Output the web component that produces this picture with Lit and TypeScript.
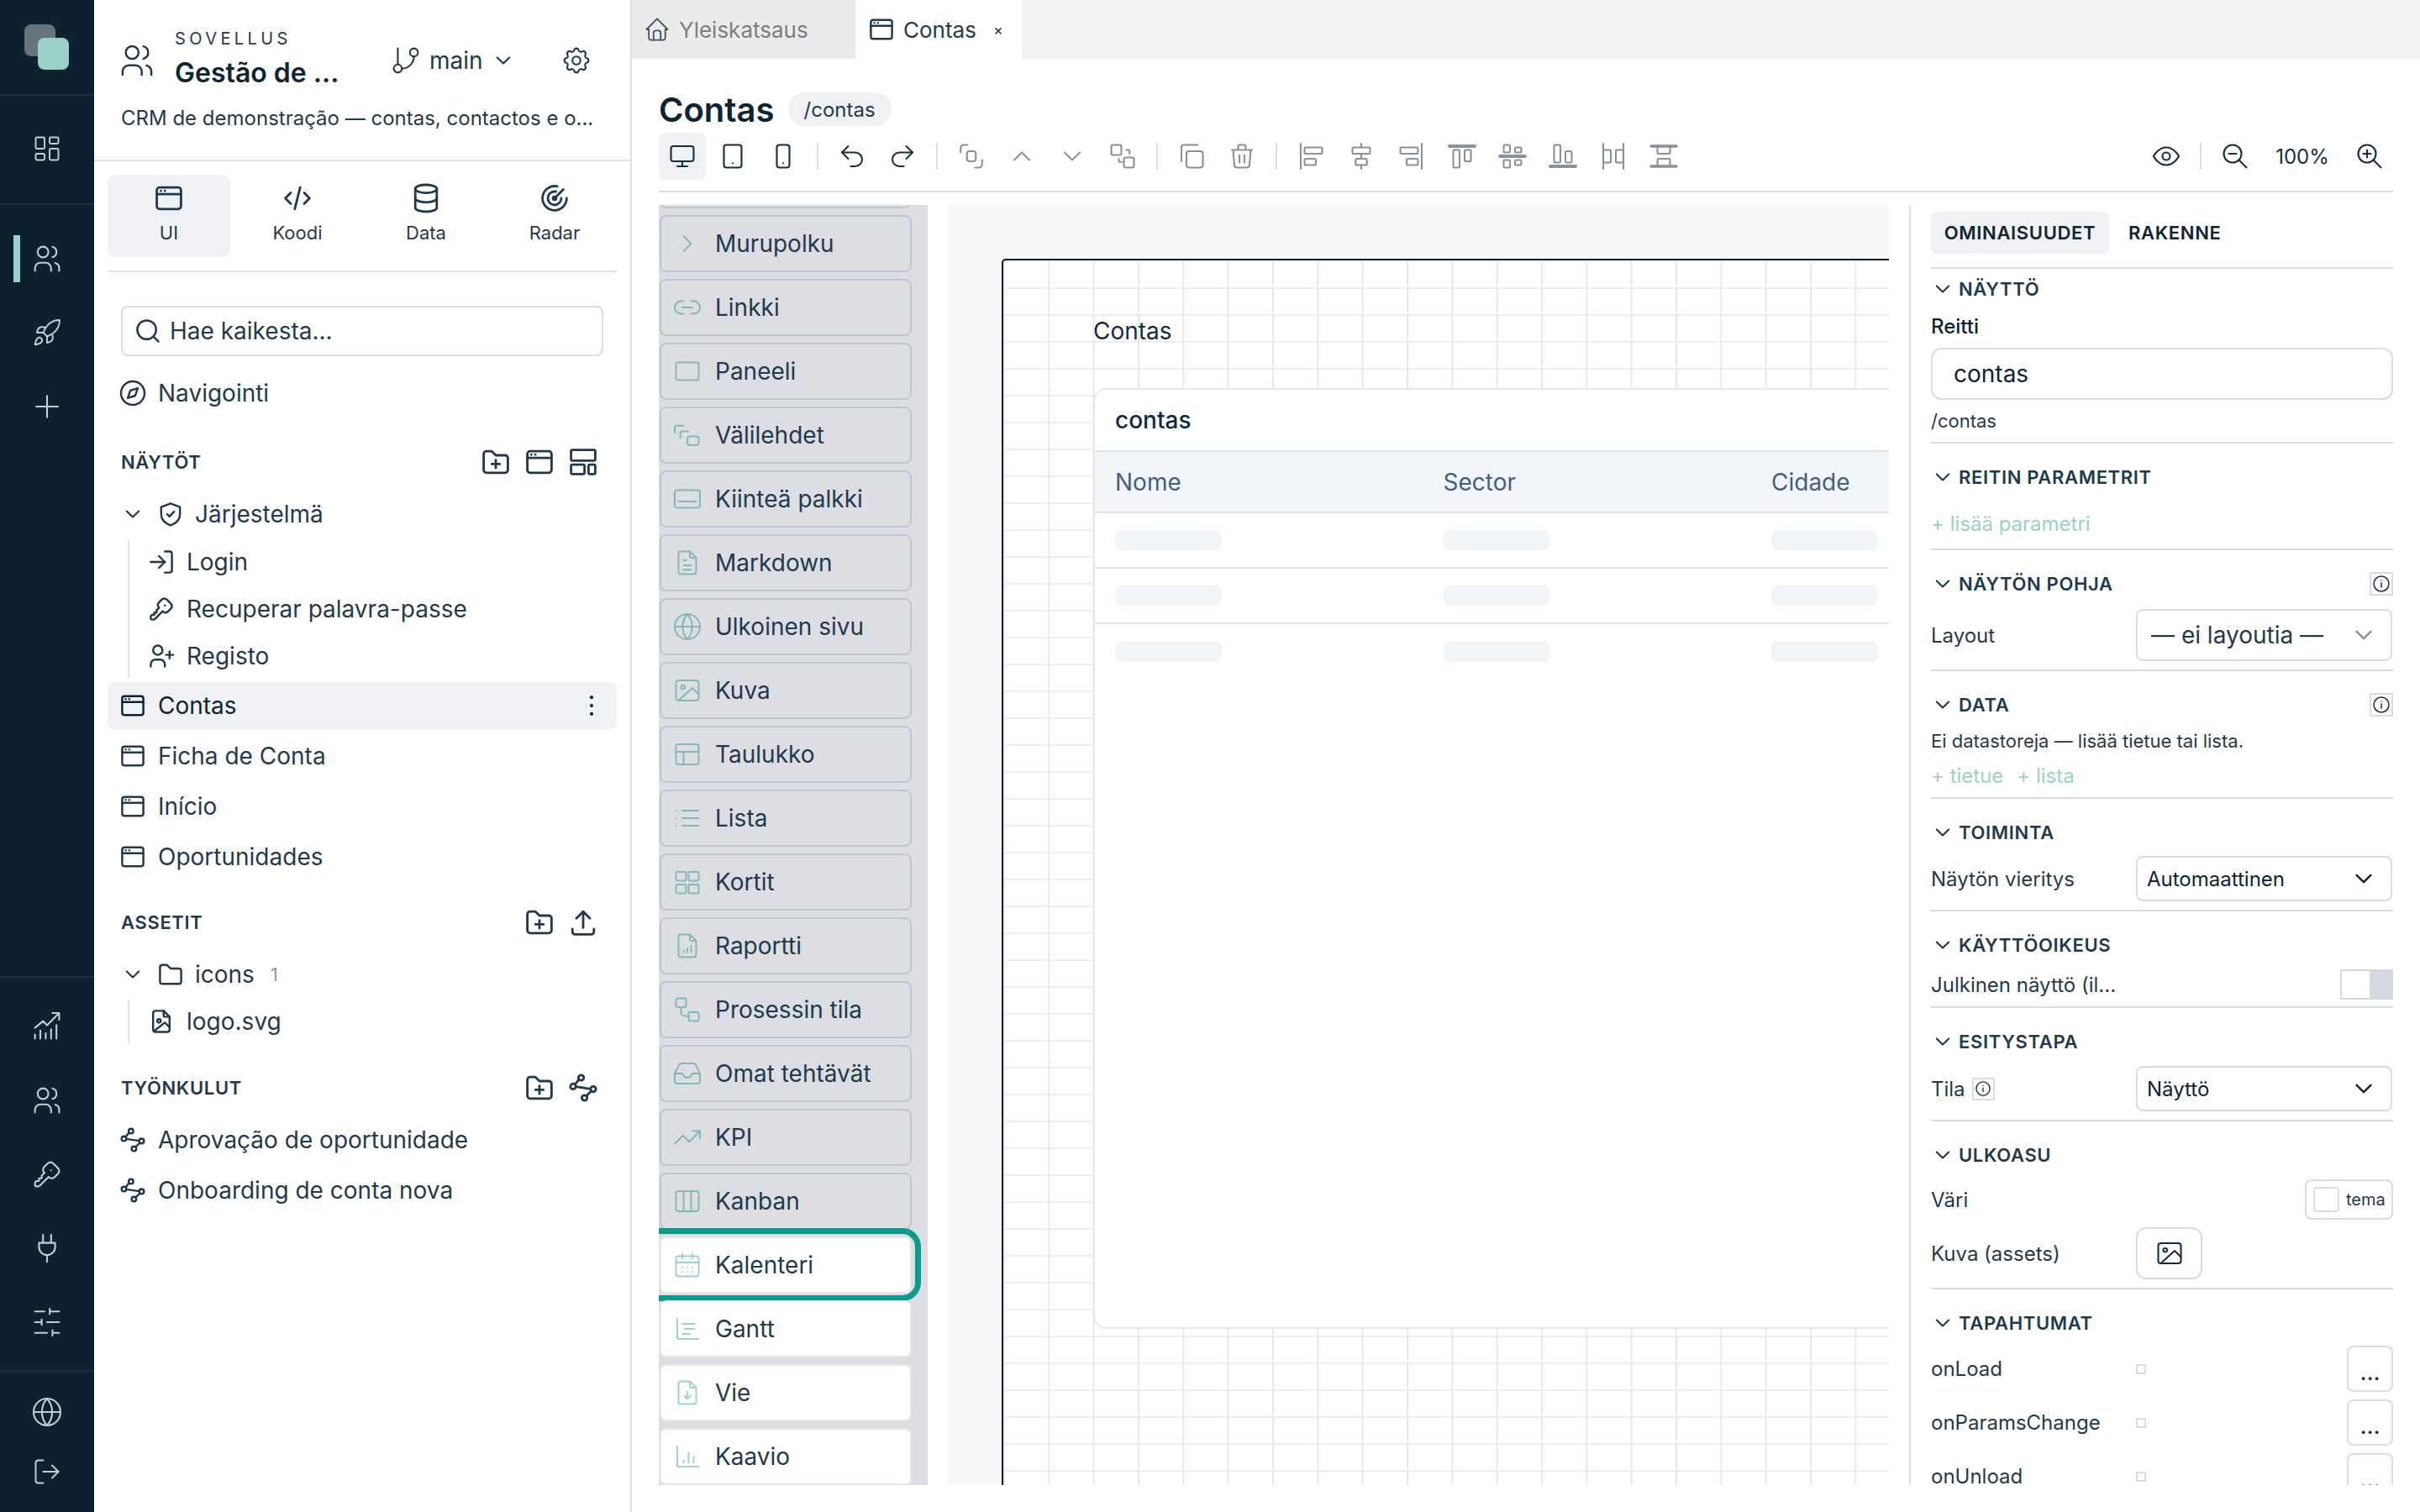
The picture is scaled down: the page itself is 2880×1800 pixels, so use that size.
import { LitElement, css, html, svg, nothing } from "lit";
import { customElement } from "lit/decorators.js";

const filePath = svg`<path d="M14 3v4a1 1 0 0 0 1 1h4"/><path d="M17 21H7a2 2 0 0 1-2-2V5a2 2 0 0 1 2-2h7l5 5v11a2 2 0 0 1-2 2z"/>`;
const windowIcon = svg`<rect x="3" y="4" width="18" height="16" rx="2"/><path d="M3 9h18M6 6.5h.01M9 6.5h.01"/>`;

const icons: Record<string, unknown> = {
  dashboard: svg`<rect x="3" y="3" width="7" height="9" rx="1"/><rect x="14" y="3" width="7" height="5" rx="1"/><rect x="14" y="12" width="7" height="9" rx="1"/><rect x="3" y="16" width="7" height="5" rx="1"/>`,
  users: svg`<circle cx="9" cy="7" r="4"/><path d="M3 21v-2a4 4 0 0 1 4-4h4a4 4 0 0 1 4 4v2"/><path d="M16 3.13a4 4 0 0 1 0 7.75"/><path d="M21 21v-2a4 4 0 0 0-3-3.85"/>`,
  rocket: svg`<path d="M4.5 16.5c-1.5 1.26-2 5-2 5s3.74-.5 5-2c.71-.84.7-2.13-.09-2.91a2.18 2.18 0 0 0-2.91-.09z"/><path d="m12 15-3-3a22 22 0 0 1 2-3.95A12.88 12.88 0 0 1 22 2c0 2.72-.78 7.5-6 11a22.35 22.35 0 0 1-4 2z"/><path d="M9 12H4s.55-3.03 2-4c1.62-1.08 5 0 5 0"/><path d="M12 15v5s3.03-.55 4-2c1.08-1.62 0-5 0-5"/>`,
  plus: svg`<path d="M12 4v16M4 12h16"/>`,
  analytics: svg`<path d="M3 21v-3M7 21v-6M11 21v-4M15 21v-7M19 21v-10M3 13l6-5 3 3 9-9M16 2h5v5"/>`,
  key: svg`<path d="M16.555 3.843l3.602 3.602a2.877 2.877 0 0 1 0 4.069l-2.643 2.643a2.877 2.877 0 0 1-4.069 0l-.301-.301l-6.558 6.558a2 2 0 0 1-1.239.578l-.175.008h-1.172a1 1 0 0 1-.993-.883l-.007-.117v-1.172a2 2 0 0 1 .467-1.284l.119-.13l.414-.414h2v-2h2v-2l2.144-2.144l-.301-.301a2.877 2.877 0 0 1 0-4.069l2.643-2.643a2.877 2.877 0 0 1 4.069 0z"/><path d="M15 9h.01"/>`,
  plug: svg`<path d="M9 2v6M15 2v6M6 8h12v3a6 6 0 0 1-12 0zM12 17v5"/>`,
  sliders: svg`<path d="M21 4h-7M10 4H3M21 12h-9M8 12H3M21 20h-5M12 20H3M14 2v4M8 10v4M16 18v4"/>`,
  globe: svg`<circle cx="12" cy="12" r="10"/><path d="M2 12h20"/><path d="M12 2a15 15 0 0 1 0 20a15 15 0 0 1 0-20"/>`,
  logout: svg`<path d="M9 21H5a2 2 0 0 1-2-2V5a2 2 0 0 1 2-2h4"/><path d="m16 17 5-5-5-5"/><path d="M21 12H9"/>`,
  window: windowIcon,
  code: svg`<path d="M7 8l-4 4 4 4M17 8l4 4-4 4M14 4l-4 16"/>`,
  database: svg`<ellipse cx="12" cy="5" rx="8" ry="3"/><path d="M4 5v14a8 3 0 0 0 16 0V5"/><path d="M4 12a8 3 0 0 0 16 0"/>`,
  radar: svg`<path d="M21 12a9 9 0 1 1-7-8.8"/><path d="M17 12a5 5 0 1 1-4-4.9"/><circle cx="12" cy="12" r="1.2"/><path d="M12 12l6.5-6.5"/>`,
  search: svg`<circle cx="11" cy="11" r="8"/><path d="m21 21-4.3-4.3"/>`,
  compass: svg`<circle cx="12" cy="12" r="10"/><path d="M16.24 7.76l-2.12 6.36-6.36 2.12 2.12-6.36z"/>`,
  folderPlus: svg`<path d="M5 4h4l3 3h7a2 2 0 0 1 2 2v9a2 2 0 0 1-2 2H5a2 2 0 0 1-2-2V6a2 2 0 0 1 2-2z"/><path d="M12 10.5v6M9 13.5h6"/>`,
  layout: svg`<rect x="3" y="3" width="18" height="8" rx="1"/><rect x="3" y="14" width="10" height="7" rx="1"/><rect x="16" y="14" width="5" height="7" rx="1"/>`,
  chevronDown: svg`<path d="m6 9 6 6 6-6"/>`,
  chevronUp: svg`<path d="m6 15 6-6 6 6"/>`,
  chevronRight: svg`<path d="m9 6 6 6-6 6"/>`,
  shield: svg`<path d="M12 3l8 3v6c0 5-3.5 8-8 9.5C7.5 20 4 17 4 12V6z"/><path d="M9 12l2 2 4-4"/>`,
  login: svg`<path d="M15 3h4a2 2 0 0 1 2 2v14a2 2 0 0 1-2 2h-4"/><path d="m10 17 5-5-5-5"/><path d="M15 12H3"/>`,
  userPlus: svg`<circle cx="9" cy="7" r="4"/><path d="M3 21v-2a4 4 0 0 1 4-4h4a4 4 0 0 1 4 4v2"/><path d="M19 8v6M16 11h6"/>`,
  dots: svg`<path d="M12 5h.01M12 12h.01M12 19h.01" stroke-width="3"/>`,
  folder: svg`<path d="M5 4h4l3 3h7a2 2 0 0 1 2 2v9a2 2 0 0 1-2 2H5a2 2 0 0 1-2-2V6a2 2 0 0 1 2-2z"/>`,
  upload: svg`<path d="M4 17v2a2 2 0 0 0 2 2h12a2 2 0 0 0 2-2v-2"/><path d="m7 9 5-5 5 5"/><path d="M12 4v12"/>`,
  fileImage: svg`${filePath}<circle cx="10" cy="11.5" r="1.5"/><path d="m6 20 9-7 4 4"/>`,
  flow: svg`<circle cx="10.5" cy="4.5" r="2"/><circle cx="4.5" cy="11" r="2"/><circle cx="19.5" cy="13" r="2"/><circle cx="13" cy="19.5" r="2"/><path d="M8.7 6 6 9.5M6.5 11.2l11 1.6M18 14.5l-3.5 3.5"/>`,
  branch: svg`<path d="M6 3v12"/><circle cx="18" cy="6" r="3"/><circle cx="6" cy="18" r="3"/><path d="M18 9a9 9 0 0 1-9 9"/>`,
  gear: svg`<path d="M10.325 4.317c.426-1.756 2.924-1.756 3.35 0a1.724 1.724 0 0 0 2.573 1.066c1.543-.94 3.31.826 2.37 2.37a1.724 1.724 0 0 0 1.065 2.572c1.756.426 1.756 2.924 0 3.35a1.724 1.724 0 0 0-1.066 2.573c.94 1.543-.826 3.31-2.37 2.37a1.724 1.724 0 0 0-2.572 1.065c-.426 1.756-2.924 1.756-3.35 0a1.724 1.724 0 0 0-2.573-1.066c-1.543.94-3.31-.826-2.37-2.37a1.724 1.724 0 0 0-1.065-2.572c-1.756-.426-1.756-2.924 0-3.35a1.724 1.724 0 0 0 1.066-2.573c-.94-1.543.826-3.31 2.37-2.37c1 .608 2.296.07 2.572-1.065z"/><circle cx="12" cy="12" r="3"/>`,
  home: svg`<path d="M5 12H3l9-9 9 9h-2"/><path d="M5 12v7a2 2 0 0 0 2 2h10a2 2 0 0 0 2-2v-7"/><path d="M9 21v-6a2 2 0 0 1 2-2h2a2 2 0 0 1 2 2v6"/>`,
  monitor: svg`<rect x="3" y="4" width="18" height="12" rx="2"/><path d="M12 16v4M8 20h8"/>`,
  tablet: svg`<rect x="5" y="3" width="14" height="18" rx="2"/><path d="M12 17.5h.01"/>`,
  phone: svg`<rect x="7" y="3" width="10" height="18" rx="2"/><path d="M12 17.5h.01"/>`,
  undo: svg`<path d="M9 14 4 9l5-5"/><path d="M4 9h10.5a5.5 5.5 0 0 1 0 11H11"/>`,
  redo: svg`<path d="m15 14 5-5-5-5"/><path d="M20 9H9.5a5.5 5.5 0 0 0 0 11H13"/>`,
  group: svg`<path d="M9 3H6a2.5 2.5 0 0 0-2.5 2.5V9"/><rect x="8.5" y="8" width="7" height="8" rx="2"/><path d="M15 21h3a2.5 2.5 0 0 0 2.5-2.5V15"/>`,
  ungroup: svg`<rect x="3" y="3" width="8" height="8" rx="1.5"/><rect x="13" y="13" width="8" height="8" rx="1.5"/><path d="M15 7h1.5a1 1 0 0 1 1 1v2M9 14v1.5a1 1 0 0 0 1 1h1.5"/>`,
  copy: svg`<rect x="8" y="8" width="13" height="13" rx="2"/><path d="M4 16V5a2 2 0 0 1 2-2h11"/>`,
  trash: svg`<path d="M4 7h16M10 11v6M14 11v6M5 7l1 12a2 2 0 0 0 2 2h8a2 2 0 0 0 2-2l1-12M9 7V4a1 1 0 0 1 1-1h4a1 1 0 0 1 1 1v3"/>`,
  alignLeft: svg`<path d="M4 2v20"/><rect x="7" y="5" width="14" height="5" rx="1"/><rect x="7" y="14" width="9" height="5" rx="1"/>`,
  alignCenter: svg`<path d="M12 2v3M12 10v4M12 19v3"/><rect x="5" y="5" width="14" height="5" rx="1"/><rect x="7.5" y="14" width="9" height="5" rx="1"/>`,
  alignRight: svg`<path d="M20 2v20"/><rect x="3" y="5" width="14" height="5" rx="1"/><rect x="8" y="14" width="9" height="5" rx="1"/>`,
  alignTop: svg`<path d="M2 4h20" stroke-width="2.6"/><rect x="5" y="7" width="5" height="14" rx="1"/><rect x="14" y="7" width="5" height="9" rx="1"/>`,
  alignMiddle: svg`<path d="M2 12h20" stroke-width="2.6"/><rect x="5" y="3" width="5" height="6" rx="1"/><rect x="5" y="15" width="5" height="6" rx="1"/><rect x="14" y="5" width="5" height="4" rx="1"/><rect x="14" y="15" width="5" height="4" rx="1"/>`,
  alignBottom: svg`<path d="M2 20h20" stroke-width="2.6"/><rect x="5" y="3" width="5" height="14" rx="1"/><rect x="14" y="8" width="5" height="9" rx="1"/>`,
  distH: svg`<path d="M4 2v20M20 2v20"/><rect x="4" y="7" width="6" height="10" rx="1"/><rect x="14" y="7" width="6" height="10" rx="1"/>`,
  distV: svg`<path d="M2 4h20M2 20h20" stroke-width="2.2"/><rect x="7" y="4" width="10" height="6" rx="1"/><rect x="7" y="14" width="10" height="6" rx="1"/>`,
  eye: svg`<path d="M2 12s3.5-7 10-7 10 7 10 7-3.5 7-10 7-10-7-10-7z"/><circle cx="12" cy="12" r="3"/>`,
  zoomOut: svg`<circle cx="10" cy="10" r="7"/><path d="m21 21-6-6M7 10h6"/>`,
  zoomIn: svg`<circle cx="10" cy="10" r="7"/><path d="m21 21-6-6M7 10h6M10 7v6"/>`,
  info: svg`<circle cx="12" cy="12" r="9"/><path d="M12 11v5M12 8h.01"/>`,
  link: svg`<path d="M9 17H7A5 5 0 0 1 7 7h2"/><path d="M15 7h2a5 5 0 1 1 0 10h-2"/><path d="M8 12h8"/>`,
  panel: svg`<rect x="3" y="5" width="18" height="14" rx="1.5"/>`,
  tabs: svg`<path d="M2 10V6a1.5 1.5 0 0 1 1.5-1.5H9"/><path d="M6.5 14v-3.5A1.5 1.5 0 0 1 8 9h5"/><rect x="12" y="13" width="9" height="7" rx="2"/>`,
  sticky: svg`<rect x="2" y="5" width="20" height="14" rx="2"/><path d="M5 14h14"/>`,
  fileText: svg`${filePath}<path d="M9 10h2M9 14h6M9 17.5h6"/>`,
  image: svg`<rect x="3" y="4" width="18" height="16" rx="2"/><circle cx="8.5" cy="9.5" r="1.5"/><path d="m21 15-5-5L5 20"/>`,
  table: svg`<rect x="3" y="4" width="18" height="16" rx="1.5"/><path d="M3 10h18M9 10v10"/>`,
  list: svg`<path d="M8 6h13M8 12h13M8 18h13M3 6h.01M3 12h.01M3 18h.01"/>`,
  grid: svg`<rect x="3" y="4" width="8" height="7" rx="1"/><rect x="13" y="4" width="8" height="7" rx="1"/><rect x="3" y="14" width="8" height="7" rx="1"/><rect x="13" y="14" width="8" height="7" rx="1"/>`,
  report: svg`${filePath}<path d="M9 17v-1M12 17v-3M15 17v-5"/>`,
  process: svg`<rect x="3" y="3" width="8" height="7" rx="1.5"/><rect x="13" y="14" width="8" height="7" rx="1.5"/><path d="M7 10v4a3 3 0 0 0 3 3h3"/>`,
  inbox: svg`<path d="M22 12h-6l-2 3h-4l-2-3H2"/><path d="M5.45 5.11 2 12v6a2 2 0 0 0 2 2h16a2 2 0 0 0 2-2v-6l-3.45-6.89A2 2 0 0 0 16.76 4H7.24a2 2 0 0 0-1.79 1.11z"/>`,
  trend: svg`<path d="M22 7l-8.5 8.5-5-5L2 17"/><path d="M16 7h6v6"/>`,
  kanban: svg`<rect x="3" y="4" width="18" height="16" rx="2"/><path d="M9 4v16M15 4v16"/>`,
  calendar: svg`<rect x="3" y="5" width="18" height="16" rx="2"/><path d="M8 3v4M16 3v4M3 10h18M8 14h.01M12 14h.01M16 14h.01M8 17.5h.01M12 17.5h.01M16 17.5h.01"/>`,
  gantt: svg`<path d="M4 4v15a1 1 0 0 0 1 1h16"/><path d="M8 8h10M10 12h8M8 16h6"/>`,
  fileDown: svg`${filePath}<path d="M12 11v6M9.5 14.5 12 17l2.5-2.5"/>`,
  chart: svg`<path d="M4 4v15a1 1 0 0 0 1 1h16"/><path d="M9 17v-2M13 17v-8M17 17v-5"/>`,
};

function ic(name: string, size = 28, sw = 1.75) {
  return html`<svg class="ic" width=${size} height=${size} viewBox="2 2 20 20" fill="none" stroke="currentColor" stroke-width=${sw} stroke-linecap="round" stroke-linejoin="round">${icons[name]}</svg>`;
}

const palette: [string, string][] = [
  ["chevronRight", "Murupolku"], ["link", "Linkki"], ["panel", "Paneeli"], ["tabs", "Välilehdet"],
  ["sticky", "Kiinteä palkki"], ["fileText", "Markdown"], ["globe", "Ulkoinen sivu"], ["image", "Kuva"],
  ["table", "Taulukko"], ["list", "Lista"], ["grid", "Kortit"], ["report", "Raportti"],
  ["process", "Prosessin tila"], ["inbox", "Omat tehtävät"], ["trend", "KPI"], ["kanban", "Kanban"],
  ["calendar", "Kalenteri"], ["gantt", "Gantt"], ["fileDown", "Vie"], ["chart", "Kaavio"],
];

@customElement("app-root")
export class AppRoot extends LitElement {
  static styles = css`
    :host {
      display: block;
      width: 2880px;
      height: 1800px;
      overflow: hidden;
      font-family: Inter, "Noto Sans", sans-serif;
      font-size: 28px;
      color: #1f3a4b;
      background: #fff;
    }
    * { box-sizing: border-box; }
    .ic { flex: none; display: block; overflow: visible; }
    .app { display: flex; width: 2880px; height: 1800px; }

    /* left rail */
    .rail { width: 112px; flex: none; background: #0d2230; color: #c3cdd2; display: flex; flex-direction: column; }
    .logo-zone { height: 114px; border-bottom: 2px solid #1a3342; position: relative; }
    .logo-a { position: absolute; left: 29px; top: 29px; width: 37px; height: 38px; border-radius: 8px; background: #66747c; }
    .logo-b { position: absolute; left: 45px; top: 45px; width: 37px; height: 38px; border-radius: 8px; background: #99d1c8; }
    .rail-zone { border-bottom: 2px solid #1a3342; }
    .rail-dash { height: 130px; display: flex; align-items: center; justify-content: center; padding-bottom: 2px; }
    .rail-main { flex: 1; padding-top: 20px; }
    .rail-tools { height: 469px; padding-top: 14px; }
    .rail-foot { height: 167px; flex: none; padding-top: 12px; }
    .rail-item { height: 88px; display: flex; align-items: center; justify-content: center; position: relative; }
    .rail-foot .rail-item { height: 71px; }
    .rail-item.on::before { content: ""; position: absolute; left: 16px; top: 16px; width: 8px; height: 56px; background: #99d1c8; }

    /* explorer column */
    .side { width: 640px; flex: none; border-right: 2px solid #dfe4e8; display: flex; flex-direction: column; }
    .head { height: 192px; border-bottom: 2px solid #dfe4e8; padding: 0 32px; }
    .head-top { display: flex; align-items: center; height: 122px; padding-top: 22px; }
    .head-names { margin-left: 26px; width: 259px; }
    .app-kicker { font-size: 20px; letter-spacing: 0.22em; line-height: 24px; color: #1f3a4b; }
    .app-name { font-size: 32px; font-weight: 600; line-height: 46px; color: #0d2433; margin-top: 6px; }
    .branch { display: flex; align-items: center; gap: 12px; width: 203px; }
    .desc { font-size: 24px; line-height: 34px; color: #1f3a4b; white-space: nowrap; margin-top: 2px; }
    .modes { margin: 0 16px; padding: 16px 0; border-bottom: 2px solid #dfe4e8; display: grid; grid-template-columns: repeat(4, 153px); height: 132px; }
    .mode { height: 98px; width: 146px; border-radius: 10px; display: flex; flex-direction: column; align-items: center; padding-top: 12px; gap: 10px; font-size: 22px; line-height: 30px; }
    .mode.on { background: #eff1f4; }
    .search { margin: 40px 32px 0; height: 60px; border: 2px solid #d8dde2; border-radius: 8px; display: flex; align-items: center; padding: 0 16px; gap: 12px; }
    .row { height: 56px; display: flex; align-items: center; gap: 16px; padding: 0 16px; white-space: nowrap; border-radius: 8px; margin: 0 16px; }
    .row.sel { background: #eff1f4; color: #0d2433; justify-content: flex-start; }
    .row.sel .ic:last-child { margin-left: auto; margin-right: 0; }
    .nav { margin-top: 16px; }
    .tree { display: flex; flex-direction: column; gap: 4px; }
    .group-h { height: 56px; display: flex; align-items: center; justify-content: space-between; padding: 0 40px 0 32px; font-size: 22px; font-weight: 600; letter-spacing: 0.03em; margin-top: 22px; }
    .group-h.first { margin-top: 26px; margin-bottom: 6px; }
    .group-h.wide { margin-top: 24px; }
    .group-h .btns { display: flex; gap: 20px; }
    .row.parent { gap: 19px; padding-left: 18px; }
    .row.parent .label { margin-left: -4px; }
    .kids { margin: -1px 0 1px 40px; border-left: 2px solid #dfe4e8; padding-left: 0; display: flex; flex-direction: column; gap: 4px; }
    .kid { height: 52px; display: flex; align-items: center; gap: 16px; padding-left: 24px; }
    .count { font-size: 22px; color: #8a97a0; margin-left: 0; }

    /* workspace */
    .main { flex: 1; min-width: 0; display: flex; flex-direction: column; }
    .tabs { height: 70px; background: #f2f2f2; display: flex; font-size: 26px; }
    .tab { display: flex; align-items: center; gap: 12px; padding-left: 16px; }
    .tab.off { width: 266px; background: #ebebeb; color: #7b7f83; }
    .tab.off .ic { color: #3a5563; }
    .tab.on { width: 198px; background: #fff; color: #1f3a4b; padding-left: 17px; }
    .tab .x { font-size: 18px; margin-left: 8px; color: #1f3a4b; }
    .title-row { display: flex; align-items: center; gap: 16px; height: 56px; padding: 0 32px; margin-top: 32px; }
    .title { font-size: 40px; font-weight: 600; color: #0d2433; }
    .route { font-size: 24px; height: 40px; padding: 0 19px; border-radius: 20px; background: #eff1f4; display: flex; align-items: center; color: #1f3a4b; }
    .tools { margin: 0 32px; height: 71px; border-bottom: 2px solid #d8dde2; display: flex; color: #12303f; }
    .tb { width: 56px; height: 56px; border-radius: 8px; display: flex; align-items: center; justify-content: center; margin-right: 4px; }
    .tb.on { background: #eff1f4; }
    .tb.dim { color: #87929a; }
    .tb.last { margin-right: 0; }
    .sep { width: 2px; height: 32px; margin: 12px 12px 0 8px; background: #d8dde2; flex: none; }
    .grow { flex: 1; }
    .pct { width: 104px; height: 56px; display: flex; align-items: center; justify-content: center; font-size: 24px; }
    .work { flex: 1; min-height: 0; margin: 15px 32px 32px; display: flex; gap: 24px; }

    /* component palette */
    .pal { width: 320px; flex: none; background: #dcdee3; overflow: hidden; display: flex; flex-direction: column; gap: 8px; padding-left: 1px; }
    .pal-item { width: 300px; height: 68px; flex: none; border-radius: 8px; border: 2px solid #bfc5cc; display: flex; align-items: center; padding-left: 16px; gap: 18px; position: relative; color: #1f3a4b; }
    .pal-item .ic { color: #84b8b0; }
    .pal-item.top { margin-top: -64px; }
    .pal-item.live { background: #fff; border-color: #e6e8ec; }
    .pal-item.live .ic { color: #9dd3ca; }
    .ring { position: absolute; left: -24px; right: -13px; top: -12px; bottom: -11px; border: 7px solid #0e9a8a; border-radius: 22px; }

    /* preview canvas */
    .canvas { width: 1120px; flex: none; background: #f8f9fb; overflow: hidden; padding: 64px 0 0 64px; }
    .frame {
      width: 1600px; height: 1600px; border: solid #0d2230; border-width: 2px 0 0 2px; border-radius: 5px 0 0 0;
      background-color: #fff;
      background-image: linear-gradient(to right, #e6e8eb 2px, transparent 2px), linear-gradient(to bottom, #eceef0 2px, transparent 2px);
      background-size: 53.33px 32px;
      background-position: 0 0;
      padding: 67px 0 0 107px;
    }
    .frame-title { line-height: 34px; color: #0f2a44; }
    .card { margin-top: 51px; width: 1400px; height: 1120px; background: #fff; border: 2px solid #e2e8f0; border-radius: 16px; }
    .card-title { height: 72px; display: flex; align-items: center; padding-left: 24px; font-weight: 500; color: #0f2a44; }
    .cols { display: grid; grid-template-columns: repeat(4, 390.5px); padding-left: 24px; align-items: center; }
    .cols.th { height: 75px; background: #f1f5f9; border-top: 2px solid #e2e8f0; border-bottom: 2px solid #e2e8f0; color: #475f7a; }
    .cols.tr { height: 66px; border-bottom: 2px solid #e2e8f0; }
    .cols.tr:last-child { border-bottom: none; }
    .sk { width: 127px; height: 24px; border-radius: 8px; background: #f1f5f9; }

    /* inspector */
    .props { flex: 1; min-width: 0; border-left: 2px solid #dfe4e8; padding-left: 24px; overflow: hidden; font-size: 24px; }
    .ptabs { display: flex; height: 76px; padding-top: 8px; gap: 23px; border-bottom: 2px solid #d8dde2; font-size: 22px; font-weight: 600; letter-spacing: 0.03em; }
    .ptab { height: 50px; width: 212px; display: flex; align-items: center; justify-content: center; border-radius: 8px; color: #0d2433; }
    .ptab.on { background: #eff1f4; }
    .ptab + .ptab { width: auto; }
    .sec { border-bottom: 2px solid #d8dde2; padding-top: 16px; }
    .sec.plain { border-bottom: none; }
    .sec-h { height: 48px; display: flex; align-items: center; gap: 7px; font-size: 22px; font-weight: 600; letter-spacing: 0.03em; padding-left: 2px; }
    .sec-h .info { margin-left: auto; }
    .info { width: 28px; height: 28px; border: 2px solid #d8dde2; display: flex; align-items: center; justify-content: center; color: #12303f; flex: none; }
    .line { line-height: 30px; white-space: nowrap; }
    .small { font-size: 22px; }
    .mint { color: #99d1c8; }
    .links { display: flex; gap: 16px; }
    .input { height: 62px; border: 2px solid #d8dde2; border-radius: 12px; display: flex; align-items: center; padding-left: 25px; font-size: 28px; color: #0d2433; }
    .prop { display: flex; align-items: center; }
    .prop-l { width: 244px; flex: none; display: flex; align-items: center; gap: 8px; white-space: nowrap; }
    .select { width: 305px; border: 2px solid #d8dde2; border-radius: 8px; display: flex; align-items: center; justify-content: space-between; padding: 0 18px 0 11px; height: 54px; color: #0d2433; }
    .select.big { height: 62px; font-size: 28px; padding-left: 16px; color: #1f3a4b; }
    .select.big .ic { color: #87929a; }
    .toggle { width: 63px; height: 36px; margin-left: auto; border: 2px solid #d3dae1; background: linear-gradient(to right, #fff 33px, #d3dae1 33px); }
    .tema { margin-left: auto; width: 105px; height: 48px; border: 2px solid #d8dde2; border-radius: 8px; display: flex; align-items: center; padding-left: 8px; gap: 8px; font-size: 20px; }
    .swatch { width: 31px; height: 30px; border: 2px solid #d8dde2; border-radius: 4px; flex: none; }
    .imgbtn { width: 79px; height: 62px; border: 2px solid #d8dde2; border-radius: 12px; display: flex; align-items: center; justify-content: center; color: #12303f; }
    .ev { height: 55px; margin-bottom: 9px; }
    .ev .box { width: 12px; height: 12px; border: 2px solid #d8dde2; flex: none; }
    .more { margin-left: auto; width: 55px; height: 55px; border: 2px solid #d8dde2; border-radius: 8px; display: flex; align-items: flex-end; justify-content: center; padding-bottom: 8px; line-height: 28px; font-size: 28px; color: #12303f; }
  `;

  private row(icon: string, label: string, selected = false) {
    return html`<div class="row ${selected ? "sel" : ""}">${ic(icon, 28)}<span>${label}</span>${selected ? ic("dots", 28) : nothing}</div>`;
  }

  private kid(icon: string, label: string) {
    return html`<div class="kid">${ic(icon, 28)}<span>${label}</span></div>`;
  }

  private renderRail() {
    return html`<nav class="rail">
      <div class="logo-zone"><div class="logo-a"></div><div class="logo-b"></div></div>
      <div class="rail-zone rail-dash">${ic("dashboard", 30, 1.3)}</div>
      <div class="rail-zone rail-main">
        <div class="rail-item on">${ic("users", 32, 1.3)}</div>
        <div class="rail-item">${ic("rocket", 30, 1.3)}</div>
        <div class="rail-item">${ic("plus", 32, 1.3)}</div>
      </div>
      <div class="rail-zone rail-tools">
        ${["analytics", "users", "key", "plug", "sliders"].map((n) => html`<div class="rail-item">${ic(n, 32, 1.3)}</div>`)}
      </div>
      <div class="rail-foot">
        <div class="rail-item">${ic("globe", 32, 1.3)}</div>
        <div class="rail-item">${ic("logout", 30, 1.3)}</div>
      </div>
    </nav>`;
  }

  private renderSide() {
    return html`<aside class="side">
      <div class="head">
        <div class="head-top">
          ${ic("users", 38, 1.3)}
          <div class="head-names">
            <div class="app-kicker">SOVELLUS</div>
            <div class="app-name">Gestão de ...</div>
          </div>
          <div class="branch">${ic("branch", 32, 1.3)}<span>main</span>${ic("chevronDown", 24)}</div>
          ${ic("gear", 32, 1.3)}
        </div>
        <div class="desc">CRM de demonstração — contas, contactos e o...</div>
      </div>
      <div class="modes">
        <div class="mode on">${ic("window", 32)}UI</div>
        <div class="mode">${ic("code", 32)}Koodi</div>
        <div class="mode">${ic("database", 32)}Data</div>
        <div class="mode">${ic("radar", 32)}Radar</div>
      </div>
      <div class="search">${ic("search", 28)}<span>Hae kaikesta...</span></div>
      <div class="nav">${this.row("compass", "Navigointi")}</div>

      <div class="group-h first">
        <span>NÄYTÖT</span>
        <div class="btns">${ic("folderPlus", 32)}${ic("window", 32)}${ic("layout", 32)}</div>
      </div>
      <div class="tree">
        <div class="row parent">${ic("chevronDown", 24)}${ic("shield", 28)}<span class="label">Järjestelmä</span></div>
        <div class="kids">
          ${this.kid("login", "Login")}${this.kid("key", "Recuperar palavra-passe")}${this.kid("userPlus", "Registo")}
        </div>
        ${this.row("window", "Contas", true)}
        ${this.row("window", "Ficha de Conta")}
        ${this.row("window", "Início")}
        ${this.row("window", "Oportunidades")}
      </div>

      <div class="group-h">
        <span>ASSETIT</span>
        <div class="btns">${ic("folderPlus", 32)}${ic("upload", 32)}</div>
      </div>
      <div class="tree" style="margin-top:6px">
        <div class="row parent">${ic("chevronDown", 24)}${ic("folder", 28)}<span class="label">icons</span><span class="count">1</span></div>
        <div class="kids" style="margin-top:-2px">${this.kid("fileImage", "logo.svg")}</div>
      </div>

      <div class="group-h wide">
        <span>TYÖNKULUT</span>
        <div class="btns">${ic("folderPlus", 32)}${ic("flow", 32)}</div>
      </div>
      <div class="tree" style="margin-top:6px">
        ${this.row("flow", "Aprovação de oportunidade")}
        ${this.row("flow", "Onboarding de conta nova")}
      </div>
    </aside>`;
  }

  private tb(icon: string, cls = "") {
    return html`<div class="tb ${cls}">${ic(icon, 30, 1.4)}</div>`;
  }

  private renderTools() {
    return html`<div class="tools">
      ${this.tb("monitor", "on")}${this.tb("tablet")}${this.tb("phone")}
      <div class="sep"></div>
      ${this.tb("undo")}${this.tb("redo")}
      <div class="sep"></div>
      ${["group", "chevronUp", "chevronDown", "ungroup"].map((n) => this.tb(n, "dim"))}
      <div class="sep"></div>
      ${["copy", "trash"].map((n) => this.tb(n, "dim"))}
      <div class="sep"></div>
      ${["alignLeft", "alignCenter", "alignRight", "alignTop", "alignMiddle", "alignBottom", "distH", "distV"].map((n) => this.tb(n, "dim"))}
      <div class="grow"></div>
      ${this.tb("eye")}
      <div class="sep"></div>
      ${this.tb("zoomOut", "last")}
      <div class="pct">100%</div>
      ${this.tb("zoomIn", "last")}
    </div>`;
  }

  private renderPalette() {
    return html`<div class="pal">
      <div class="pal-item top"></div>
      ${palette.map(([icon, label], i) => html`<div class="pal-item ${i >= 16 ? "live" : ""}">
        ${ic(icon, 30, 1.3)}<span>${label}</span>
        ${i === 16 ? html`<div class="ring"></div>` : nothing}
      </div>`)}
    </div>`;
  }

  private renderCanvas() {
    const skeletons = html`<div class="sk"></div><div class="sk"></div><div class="sk"></div><div class="sk"></div>`;
    return html`<div class="canvas">
      <div class="frame">
        <div class="frame-title">Contas</div>
        <div class="card">
          <div class="card-title">contas</div>
          <div class="cols th"><span>Nome</span><span>Sector</span><span>Cidade</span><span></span></div>
          <div class="cols tr">${skeletons}</div>
          <div class="cols tr">${skeletons}</div>
          <div class="cols tr">${skeletons}</div>
        </div>
      </div>
    </div>`;
  }

  private secHead(title: string, info = false) {
    return html`<div class="sec-h">${ic("chevronDown", 24)}<span>${title}</span>${info ? html`<div class="info">${ic("info", 20, 1.5)}</div>` : nothing}</div>`;
  }

  private select(value: string, big = false) {
    return html`<div class="select ${big ? "big" : ""}"><span>${value}</span>${ic("chevronDown", 28)}</div>`;
  }

  private renderProps() {
    return html`<div class="props">
      <div class="ptabs"><div class="ptab on">OMINAISUUDET</div><div class="ptab">RAKENNE</div></div>

      <div class="sec" style="padding-top:0;padding-bottom:10px">
        ${this.secHead("NÄYTTÖ")}
        <div class="line" style="margin-top:6px;font-weight:500;color:#0d2433">Reitti</div>
        <div class="input" style="margin-top:10px">contas</div>
        <div class="line small" style="margin-top:10px">/contas</div>
      </div>

      <div class="sec" style="padding-bottom:14px">
        ${this.secHead("REITIN PARAMETRIT")}
        <div class="line mint" style="margin-top:17px">+ lisää parametri</div>
      </div>

      <div class="sec" style="padding-bottom:10px">
        ${this.secHead("NÄYTÖN POHJA", true)}
        <div class="prop" style="margin-top:6px"><div class="prop-l">Layout</div>${this.select("— ei layoutia —", true)}</div>
      </div>

      <div class="sec" style="padding-bottom:10px">
        ${this.secHead("DATA", true)}
        <div class="line small" style="margin-top:4px">Ei datastoreja — lisää tietue tai lista.</div>
        <div class="line mint links" style="margin-top:12px"><span>+ tietue</span><span>+ lista</span></div>
      </div>

      <div class="sec" style="padding-bottom:10px">
        ${this.secHead("TOIMINTA")}
        <div class="prop" style="margin-top:4px"><div class="prop-l">Näytön vieritys</div>${this.select("Automaattinen")}</div>
      </div>

      <div class="sec" style="padding-bottom:8px">
        ${this.secHead("KÄYTTÖOIKEUS")}
        <div class="prop" style="margin-top:5px"><div class="prop-l">Julkinen näyttö (il...</div><div class="toggle"></div></div>
      </div>

      <div class="sec" style="padding-bottom:10px">
        ${this.secHead("ESITYSTAPA")}
        <div class="prop" style="margin-top:5px">
          <div class="prop-l">Tila <div class="info" style="width:27px;height:27px">${ic("info", 18, 1.5)}</div></div>
          ${this.select("Näyttö")}
        </div>
      </div>

      <div class="sec" style="padding-bottom:10px">
        ${this.secHead("ULKOASU")}
        <div class="prop" style="margin-top:5px"><div class="prop-l">Väri</div><div class="tema"><div class="swatch"></div>tema</div></div>
        <div class="prop" style="margin-top:9px"><div class="prop-l">Kuva (assets)</div><div class="imgbtn">${ic("image", 30, 1.4)}</div></div>
      </div>

      <div class="sec plain">
        ${this.secHead("TAPAHTUMAT")}
        <div style="margin-top:3px">
          ${["onLoad", "onParamsChange", "onUnload"].map((name) => html`<div class="prop ev"><div class="prop-l">${name}</div><div class="box"></div><div class="more">...</div></div>`)}
        </div>
      </div>
    </div>`;
  }

  render() {
    return html`<div class="app">
      ${this.renderRail()}
      ${this.renderSide()}
      <main class="main">
        <div class="tabs">
          <div class="tab off">${ic("home", 28, 1.3)}Yleiskatsaus</div>
          <div class="tab on">${ic("window", 28)}Contas<span class="x">×</span></div>
        </div>
        <div class="title-row"><div class="title">Contas</div><div class="route">/contas</div></div>
        ${this.renderTools()}
        <div class="work">
          ${this.renderPalette()}
          ${this.renderCanvas()}
          ${this.renderProps()}
        </div>
      </main>
    </div>`;
  }
}
